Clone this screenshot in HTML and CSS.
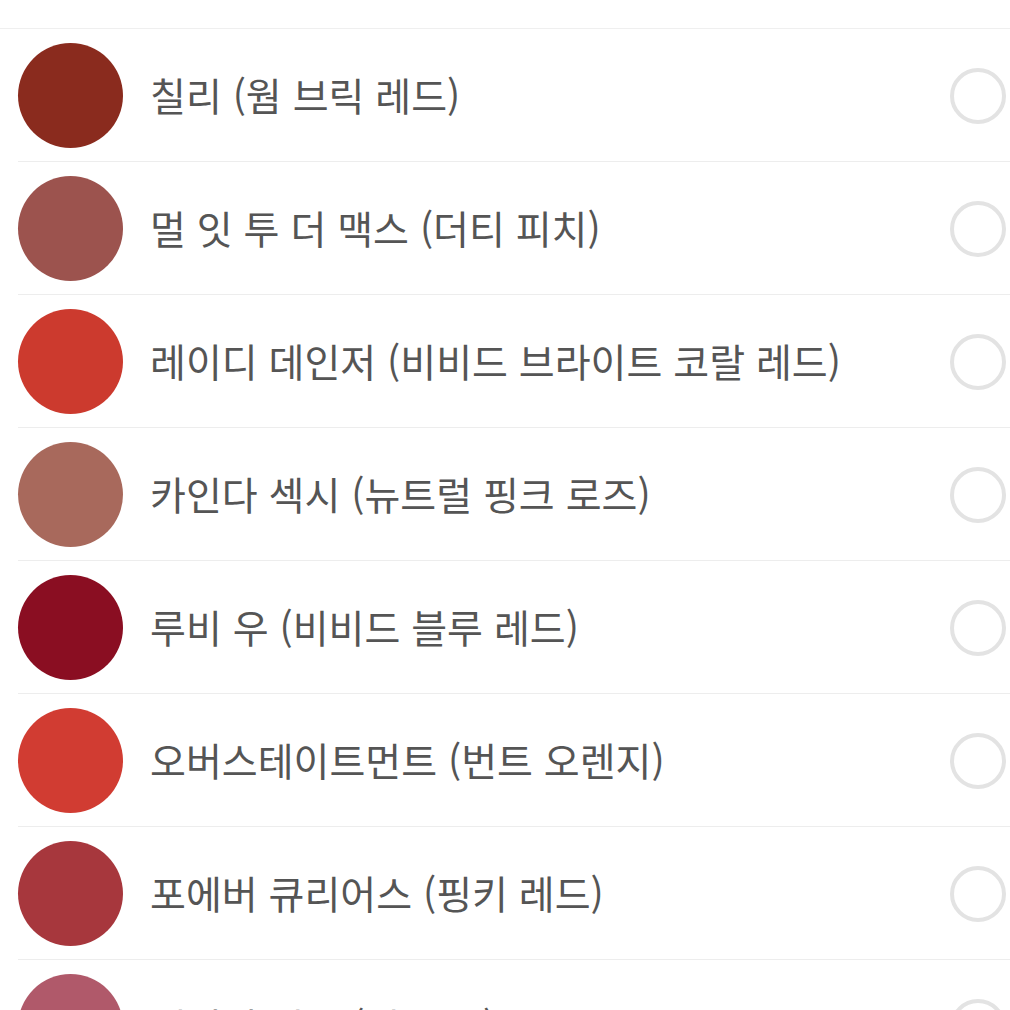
FILE: index.html
```html
<!DOCTYPE html>
<html lang="ko">
<head>
<meta charset="utf-8">
<link rel="stylesheet" href="styles.css">
</head>
<body>
<div class="page">
  <div class="header"></div>
  <ul class="list">
    <li class="row"><span class="swatch c1"></span><span class="name">칠리 (웜 브릭 레드)</span><span class="radio"></span></li>
    <li class="row"><span class="swatch c2"></span><span class="name">멀 잇 투 더 맥스 (더티 피치)</span><span class="radio"></span></li>
    <li class="row"><span class="swatch c3"></span><span class="name">레이디 데인저 (비비드 브라이트 코랄 레드)</span><span class="radio"></span></li>
    <li class="row"><span class="swatch c4"></span><span class="name">카인다 섹시 (뉴트럴 핑크 로즈)</span><span class="radio"></span></li>
    <li class="row"><span class="swatch c5"></span><span class="name">루비 우 (비비드 블루 레드)</span><span class="radio"></span></li>
    <li class="row"><span class="swatch c6"></span><span class="name">오버스테이트먼트 (번트 오렌지)</span><span class="radio"></span></li>
    <li class="row"><span class="swatch c7"></span><span class="name">포에버 큐리어스 (핑키 레드)</span><span class="radio"></span></li>
    <li class="row"><span class="swatch c8"></span><span class="name">패셔너 핑크 (웜 로즈)</span><span class="radio"></span></li>
  </ul>
</div>
</body>
</html>
```
FILE: styles.css
```css
html, body {
  margin: 0;
  padding: 0;
  background: #ffffff;
}
body {
  font-family: "Noto Sans CJK KR", "Noto Sans", sans-serif;
  overflow: hidden;
  height: 1010px;
}
.page {
  width: 1010px;
}
.header {
  height: 28px;
  border-bottom: 1px solid #efefef;
}
.list {
  list-style: none;
  margin: 0;
  padding: 0 0 0 18px;
}
.row {
  display: flex;
  align-items: center;
  height: 132px;
  border-bottom: 1px solid #ededed;
}
.swatch {
  flex: 0 0 auto;
  width: 105px;
  height: 105px;
  border-radius: 50%;
  margin-top: 1px;
}
.c1 { background: #8a2b1e; }
.c2 { background: #9c534e; }
.c3 { background: #cc3a2e; }
.c4 { background: #a8695c; }
.c5 { background: #8a0e22; }
.c6 { background: #d13c32; }
.c7 { background: #a7373d; }
.c8 { background: #b0596a; }
.name {
  flex: 1 1 auto;
  margin-left: 27px;
  margin-bottom: 2px;
  font-size: 39px;
  color: #555555;
  white-space: nowrap;
  line-height: 1;
}
.radio {
  flex: 0 0 auto;
  width: 48px;
  height: 48px;
  border: 4px solid #e3e3e3;
  border-radius: 50%;
  margin-right: 4px;
  margin-top: 2px;
}
```
